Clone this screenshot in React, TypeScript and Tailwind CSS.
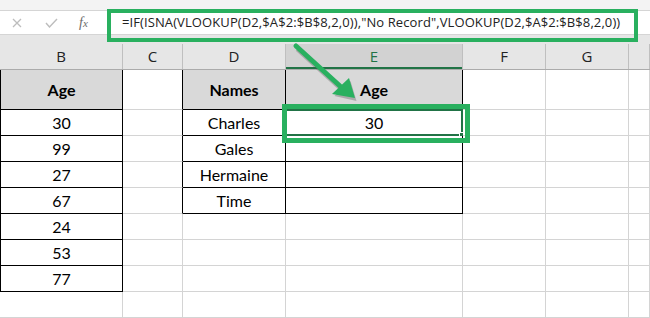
import React from "react";

const cols = [123, 60, 103, 177, 83, 83, 21];
const colNames = ["B", "C", "D", "E", "F", "G", ""];
const rowHeights = [40, 26, 26, 26, 26, 26, 26, 26, 26];

const ages = ["Age", "30", "99", "27", "67", "24", "53", "77"];
const names = ["Names", "Charles", "Gales", "Hermaine", "Time"];

function cellClasses(c: number, r: number) {
  const cls: string[] = ["relative flex items-center justify-center border-r border-b"];
  let right = "border-r-[#d4d4d4]";
  let bottom = "border-b-[#d4d4d4]";
  if (c === 0 && r <= 7) {
    right = "border-r-black";
    bottom = "border-b-black";
    cls.push("border-l border-l-black");
  }
  if (c === 1 && r <= 4) right = "border-r-black";
  if ((c === 2 || c === 3) && r <= 4) {
    right = "border-r-black";
    bottom = "border-b-black";
  }
  if (r === 0 && (c === 0 || c === 2 || c === 3)) cls.push("bg-[#d9d9d9] font-bold");
  else cls.push("bg-white");
  cls.push(right, bottom);
  return cls.join(" ");
}

function cellText(c: number, r: number) {
  if (c === 0 && r <= 7) return ages[r];
  if (c === 2 && r <= 4) return names[r];
  if (c === 3 && r === 0) return "Age";
  if (c === 3 && r === 1) return "30";
  return "";
}

export default function App() {
  return (
    <div className="relative w-[650px] h-[318px] overflow-hidden bg-[#e6e6e6] text-black">
      {/* top strip */}
      <div className="h-[10px] bg-[#f3f3f3]" />
      {/* formula bar */}
      <div className="flex h-[25px] bg-white border-y border-[#d5d5d5] items-center">
        <div className="w-[107px] shrink-0 flex items-center h-full">
          <svg width="10" height="10" viewBox="0 0 10 10" className="ml-[12px]">
            <path d="M1 1 L9 9 M9 1 L1 9" stroke="#bdbdbd" strokeWidth="1.3" />
          </svg>
          <svg width="13" height="10" viewBox="0 0 13 10" className="ml-[23px]">
            <path d="M1 5 L4.5 9 L12 1" stroke="#bdbdbd" strokeWidth="1.4" fill="none" />
          </svg>
          <span
            className="ml-[21px] text-[14px] italic text-[#6b6b6b] leading-none"
            style={{ fontFamily: '"Liberation Serif", serif' }}
          >
            f<span className="text-[11px]">x</span>
          </span>
        </div>
        <div
          className="pl-[15px] text-[13px] tracking-[0.1px] whitespace-nowrap text-[#222]"
          style={{ fontFamily: '"Open Sans", sans-serif' }}
        >
          =IF(ISNA(VLOOKUP(D2,$A$2:$B$8,2,0)),"No Record",VLOOKUP(D2,$A$2:$B$8,2,0))
        </div>
      </div>
      <div className="h-[9px] bg-[#e6e6e6]" />
      {/* column headers */}
      <div className="flex h-[26px] bg-[#e6e6e6] border-b border-[#ababab]" style={{ fontFamily: '"Open Sans", sans-serif' }}>
        {cols.map((w, i) => (
          <div
            key={i}
            style={{ width: w }}
            className={
              i === 3
                ? "flex items-center justify-center border-r border-[#bfbfbf] bg-[#d2d2d2] text-[#217346] text-[15px] shadow-[inset_0_-2px_0_#217346]"
                : "flex items-center justify-center border-r border-[#bfbfbf] text-[15px] text-[#222]"
            }
          >
            {colNames[i]}
          </div>
        ))}
      </div>
      {/* grid */}
      <div
        className="grid text-[16px]"
        style={{
          gridTemplateColumns: cols.map((w) => `${w}px`).join(" "),
          gridTemplateRows: rowHeights.map((h) => `${h}px`).join(" "),
          fontFamily: "Lato, sans-serif",
        }}
      >
        {rowHeights.map((_, r) =>
          cols.map((_, c) => (
            <div key={`${r}-${c}`} className={cellClasses(c, r)}>
              {cellText(c, r)}
              {c === 3 && r === 1 && (
                <div className="absolute left-[-1px] top-[-1px] right-[-1px] bottom-[-1px] border-2 border-[#217346]">
                  <div className="absolute right-[-4px] bottom-[-4px] w-[6px] h-[6px] bg-[#217346] border border-white" />
                </div>
              )}
            </div>
          ))
        )}
      </div>
      {/* annotations */}
      <div className="absolute left-[107px] top-[9px] w-[531px] h-[33px] border-4 border-[#29b05f]" />
      <div className="absolute left-[282px] top-[104px] w-[188px] h-[39px] border-[5px] border-[#29b05f]" />
      <svg className="absolute left-0 top-0" width="650" height="318">
        <g transform="translate(1.5,2)" opacity="0.35">
          <line x1="296" y1="47" x2="340" y2="87" stroke="#555" strokeWidth="5" />
          <polygon points="333,94 349,79 355,99" fill="#555" />
        </g>
        <line x1="296" y1="46" x2="340" y2="86" stroke="#29b05f" strokeWidth="5" strokeLinecap="round" />
        <polygon points="332,94 349,78 355,98" fill="#29b05f" />
      </svg>
    </div>
  );
}
